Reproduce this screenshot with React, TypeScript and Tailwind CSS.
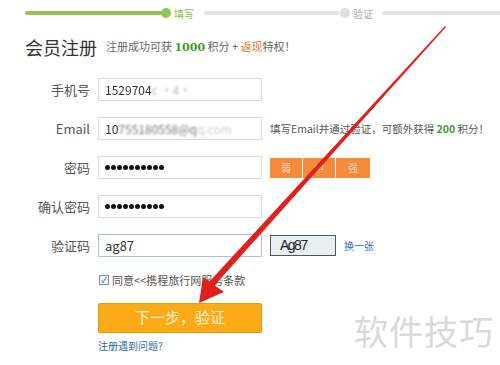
import React from "react";

const font = { fontFamily: '"Noto Sans CJK SC", "Noto Sans", sans-serif' };

const Field = ({ label, children, right }: { label: string; children: React.ReactNode; right?: React.ReactNode }) => (
  <div className="flex h-[23px] items-center">
    <div className="w-[90px] text-right text-[13px] text-[#555] pr-0">{label}</div>
    <div className="ml-[8px] flex h-[23px] w-[164px] items-center border border-[#dcdcdc] bg-white px-[6px] text-[12px] text-[#333]">
      {children}
    </div>
    {right && <div className="ml-[8px] flex items-center">{right}</div>}
  </div>
);

const Dots = () => (
  <div className="flex gap-[1px]">
    {Array.from({ length: 10 }).map((_, i) => (
      <div key={i} className="h-[5px] w-[5px] rounded-full bg-[#111]" />
    ))}
  </div>
);

export default function App() {
  return (
    <div className="relative h-[365px] w-[500px] overflow-hidden bg-white" style={font}>
      {/* progress */}
      <div className="flex h-[26px] items-center pl-[25px]">
        <div className="h-[4px] w-[138px] rounded-full bg-[#93c255]" />
        <div className="h-[10px] w-[10px] -ml-[2px] rounded-full bg-[#93c255]" />
        <span className="ml-[3px] text-[10px] text-[#8cbf4f]">填写</span>
        <div className="ml-[10px] h-[4px] w-[136px] rounded-full bg-[#e2e2e2]" />
        <div className="h-[10px] w-[10px] rounded-full bg-[#dedede]" />
        <span className="ml-[3px] text-[10px] text-[#aaa]">验证</span>
        <div className="ml-[10px] h-[4px] flex-1 bg-[#e2e2e2]" />
      </div>

      {/* title */}
      <div className="flex h-[40px] items-center pl-[25px] pt-[2px]">
        <span className="text-[18px] text-[#333]">会员注册</span>
        <span className="ml-[9px] text-[11px] text-[#666]">
          注册成功可获 <b className="text-[#3f9b2c]" style={{ fontFamily: '"DejaVu Serif", serif' }}>1000</b> 积分 +{" "}
          <b className="text-[#e8761f] font-normal">返现</b>特权！
        </span>
      </div>

      {/* form */}
      <div className="mt-[12px] flex flex-col gap-[16px]">
        <Field label="手机号">
          <span className="blur-[0.5px]">1529704</span>
          <span className="text-[#bbb] blur-[0.8px]">c ·4·</span>
        </Field>
        <Field
          label="Email"
          right={
            <span className="text-[10.5px] text-[#555]">
              填写Email并通过验证，可额外获得 <b className="text-[#3f9b2c]">200</b> 积分！
            </span>
          }
        >
          <span>10</span>
          <span className="text-[#777] blur-[0.8px]">755180558@q</span>
          <span className="text-[#ccc] blur-[0.8px]">q.com</span>
        </Field>
        <Field
          label="密码"
          right={
            <div className="flex h-[20px] gap-[1px] text-[10px] text-[#fbd7bb]">
              <div className="flex w-[32px] items-center justify-center bg-[#f58a3c]">弱</div>
              <div className="flex w-[32px] items-center justify-center bg-[#f58a3c]">中</div>
              <div className="flex w-[34px] items-center justify-center bg-[#f58a3c]">强</div>
            </div>
          }
        >
          <Dots />
        </Field>
        <Field label="确认密码">
          <Dots />
        </Field>
        <div className="flex h-[23px] items-center">
          <div className="w-[90px] text-right text-[13px] text-[#555]">验证码</div>
          <div className="ml-[8px] flex h-[23px] w-[164px] items-center border border-[#a9c4da] bg-white px-[6px] text-[13px] text-[#333]">
            ag87
          </div>
          <div className="ml-[8px] flex h-[21px] w-[66px] items-center border border-[#555] bg-[#e8f0f4] pl-[9px] text-[14px] tracking-[-1.5px] text-[#222]" style={{ fontFamily: '"Liberation Sans Narrow", "Liberation Sans", sans-serif' }}>
            Ag87
          </div>
          <span className="ml-[8px] text-[10px] text-[#2f6fb0]">换一张</span>
        </div>
      </div>

      {/* agree */}
      <div className="ml-[99px] mt-[15px] flex items-center">
        <div className="flex h-[10px] w-[10px] items-center justify-center border border-[#7c8ea8] bg-[#eef3f9] text-[8px] leading-none text-[#27489a]">✓</div>
        <span className="ml-[3px] text-[11px] text-[#555]">同意&lt;&lt;携程旅行网服务条款</span>
      </div>

      {/* button */}
      <div className="ml-[98px] mt-[14px] flex h-[30px] w-[164px] items-center justify-center rounded-[2px] border border-[#e89a10] bg-[#fbab18] text-[15px] text-[#fff3d6]">
        下一步，验证
      </div>
      <div className="ml-[98px] mt-[5px] text-[10px] text-[#2f6fb0]">注册遇到问题?</div>

      {/* watermark */}
      <div className="absolute left-[354px] top-[305px] text-[34px] tracking-[1px] text-[#d9d9d9]">软件技巧</div>

      {/* red arrow annotation */}
      <svg className="absolute left-0 top-0" width="500" height="365" viewBox="0 0 500 365">
        <polygon points="445,26 446,27 214,286 209,282" fill="#e0201c" />
        <polygon points="199,303 203,277 224,292" fill="#e0201c" />
      </svg>
    </div>
  );
}
